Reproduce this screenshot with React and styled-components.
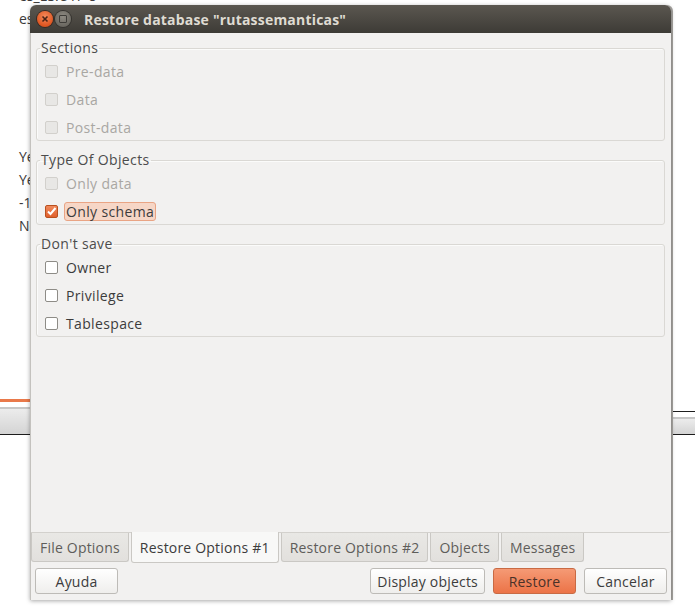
import React from "react";
import styled, { createGlobalStyle, css } from "styled-components";

const GlobalStyle = createGlobalStyle`
  body {
    margin: 0;
    background: #ffffff;
    font-family: "Open Sans", "Noto Sans", "DejaVu Sans", sans-serif;
  }
`;

const Desktop = styled.div`
  position: relative;
  width: 695px;
  height: 616px;
  overflow: hidden;
  background: #ffffff;
  display: flex;
  flex-direction: column;
`;

// terminal text behind the dialog
const BackText = styled.div`
  margin-top: -16px;
  padding-left: 19px;
  font-size: 14px;
  line-height: 23px;
  color: #3a3a3a;
`;

const BackLine = styled.div`
  height: 23px;
  white-space: pre;
`;

const Strip = styled.div`
  margin-top: 162px;
  display: flex;
  justify-content: space-between;
  height: 36px;
`;

const StripLeft = styled.div`
  width: 30px;
  border-top: 3px solid #e9794a;
  display: flex;
  flex-direction: column;
`;

const StripRight = styled.div`
  width: 24px;
  margin-top: 12px;
  border-top: 1px solid #1e1e1e;
  display: flex;
  flex-direction: column;
`;

const StripBar = styled.div`
  margin-top: ${(p) => p.$gap}px;
  flex: 1;
  border-top: 2px solid #c7c7c7;
  border-bottom: 1px solid #1c1c1c;
  background: linear-gradient(#ececec, #d4d4d4);
`;

const Dialog = styled.div`
  position: absolute;
  left: 30px;
  top: 5px;
  width: 641px;
  height: 595px;
  display: flex;
  flex-direction: column;
  border-radius: 6px 6px 0 0;
  box-shadow: 0 1px 4px rgba(0, 0, 0, 0.35), 2px 0 0 #a9a7a3;
`;

const TitleBar = styled.div`
  height: 28px;
  flex: none;
  display: flex;
  align-items: center;
  padding-left: 7px;
  gap: 2px;
  border-radius: 6px 6px 0 0;
  background: linear-gradient(#5b5750, #3d3b36);
`;

const WinButton = styled.div`
  width: 16px;
  height: 16px;
  border-radius: 50%;
  display: flex;
  align-items: center;
  justify-content: center;
  ${(p) =>
    p.$close
      ? css`
          background: radial-gradient(circle at 50% 35%, #f58a5c, #de5520 70%, #b9441a);
          box-shadow: 0 0 0 1px #3a2a22;
        `
      : css`
          background: radial-gradient(circle at 50% 35%, #8e8a82, #6c6962 70%, #55524c);
          box-shadow: 0 0 0 1px #34322e;
        `}
`;

const MinSquare = styled.div`
  width: 6px;
  height: 6px;
  border: 1px solid #3e3c38;
  border-radius: 1px;
`;

const Title = styled.div`
  margin-left: 11px;
  font-size: 14px;
  font-weight: 700;
  color: #dfdbd2;
  letter-spacing: 0.2px;
`;

const Body = styled.div`
  flex: 1;
  display: flex;
  flex-direction: column;
  background: #f2f1f0;
  border-left: 1px solid #c4c2be;
  font-size: 14px;
  letter-spacing: 0.35px;
`;

const Page = styled.div`
  flex: 1;
  padding: 7px 6px 0 5px;
  border-bottom: 1px solid #d3d1cd;
  border-radius: 0 0 3px 0;
  display: flex;
  flex-direction: column;
  gap: 11px;
`;

const Frame = styled.fieldset`
  margin: 0;
  padding: 3px 8px 1px 8px;
  border: 1px solid #dad8d4;
  border-radius: 3px;
  box-shadow: inset 1px 1px 0 #fbfbfa;
  display: flex;
  flex-direction: column;
  gap: 4px;
`;

const Legend = styled.legend`
  margin-left: -5px;
  padding: 0 1px;
  line-height: 16px;
  color: #4c4c4c;
`;

const Row = styled.label`
  height: 24px;
  display: flex;
  align-items: center;
  gap: 8px;
  color: ${(p) => (p.$disabled ? "#a9a7a3" : "#3c3c3c")};
`;

const Box = styled.span`
  width: 13px;
  height: 13px;
  box-sizing: border-box;
  border-radius: 2px;
  display: flex;
  align-items: center;
  justify-content: center;
  ${(p) =>
    p.$checked
      ? css`
          background: linear-gradient(#f08a5d, #e0602c);
          border: 1px solid #b9501f;
        `
      : p.$disabled
      ? css`
          background: #e8e7e5;
          border: 1px solid #d2d0cc;
        `
      : css`
          background: #ffffff;
          border: 1px solid #8e8c87;
        `}
`;

const RowText = styled.span`
  padding: 1px 2px;
  margin-left: -2px;
  border-radius: 3px;
  line-height: 17px;
  ${(p) =>
    p.$focus &&
    css`
      background: #f6d6c6;
      border: 1px solid #e9a484;
      padding: 0 1px;
    `}
`;

const Check = ({ label, checked, disabled, focus }) => (
  <Row $disabled={disabled}>
    <Box $checked={checked} $disabled={disabled}>
      {checked && (
        <svg width="11" height="11" viewBox="0 0 11 11">
          <path d="M2 5.5 L4.5 8 L9.5 2" fill="none" stroke="#ffffff" strokeWidth="2" />
        </svg>
      )}
    </Box>
    <RowText $focus={focus}>{label}</RowText>
  </Row>
);

const Tabs = styled.div`
  height: 31px;
  flex: none;
  display: flex;
  align-items: flex-start;
  gap: 2px;
  margin-top: -1px;
  letter-spacing: 0.2px;
`;

const Tab = styled.div`
  box-sizing: border-box;
  padding: 0 8px;
  display: flex;
  align-items: center;
  border: 1px solid #cac8c4;
  border-top: none;
  border-radius: 0 0 3px 3px;
  ${(p) =>
    p.$active
      ? css`
          height: 31px;
          background: #f8f8f7;
          color: #3c3c3c;
        `
      : css`
          height: 29px;
          margin-top: 1px;
          background: linear-gradient(#e9e8e5, #e2e0dd);
          color: #5e5d5a;
        `}
`;

const ButtonRow = styled.div`
  flex: none;
  display: flex;
  align-items: center;
  padding: 5px 4px 6px 4px;
  gap: 8px;
`;

const Spacer = styled.div`
  flex: 1;
`;

const Button = styled.button`
  height: 26px;
  min-width: 83px;
  padding: 0 6px;
  font-family: inherit;
  font-size: 14px;
  letter-spacing: 0.2px;
  border-radius: 3px;
  ${(p) =>
    p.$primary
      ? css`
          background: linear-gradient(#f59a75, #ec7347);
          border: 1px solid #c86a44;
          color: #4a3128;
        `
      : css`
          background: linear-gradient(#ffffff, #efeeec);
          border: 1px solid #bdbbb7;
          color: #3c3c3c;
        `}
`;

export default function App() {
  return (
    <Desktop>
      <GlobalStyle />
      <BackText>
        <BackLine>es_ES.UTF-8</BackLine>
        <BackLine>es_ES.UTF-8</BackLine>
        <BackLine> </BackLine>
        <BackLine> </BackLine>
        <BackLine> </BackLine>
        <BackLine> </BackLine>
        <BackLine> </BackLine>
        <BackLine>Yes</BackLine>
        <BackLine>Yes</BackLine>
        <BackLine>-1</BackLine>
        <BackLine>No</BackLine>
      </BackText>
      <Strip>
        <StripLeft>
          <StripBar $gap={5} />
        </StripLeft>
        <StripRight>
          <StripBar $gap={5} />
        </StripRight>
      </Strip>

      <Dialog>
        <TitleBar>
          <WinButton $close>
            <svg width="8" height="8" viewBox="0 0 8 8">
              <path d="M1.5 1.5 L6.5 6.5 M6.5 1.5 L1.5 6.5" stroke="#4a2416" strokeWidth="1.6" />
            </svg>
          </WinButton>
          <WinButton>
            <MinSquare />
          </WinButton>
          <Title>Restore database "rutassemanticas"</Title>
        </TitleBar>
        <Body>
          <Page>
            <Frame>
              <Legend>Sections</Legend>
              <Check label="Pre-data" disabled />
              <Check label="Data" disabled />
              <Check label="Post-data" disabled />
            </Frame>
            <Frame>
              <Legend>Type Of Objects</Legend>
              <Check label="Only data" disabled />
              <Check label="Only schema" checked focus />
            </Frame>
            <Frame>
              <Legend>Don't save</Legend>
              <Check label="Owner" />
              <Check label="Privilege" />
              <Check label="Tablespace" />
            </Frame>
          </Page>
          <Tabs>
            <Tab>File Options</Tab>
            <Tab $active>Restore Options #1</Tab>
            <Tab>Restore Options #2</Tab>
            <Tab>Objects</Tab>
            <Tab>Messages</Tab>
          </Tabs>
          <ButtonRow>
            <Button>Ayuda</Button>
            <Spacer />
            <Button>Display objects</Button>
            <Button $primary>Restore</Button>
            <Button>Cancelar</Button>
          </ButtonRow>
        </Body>
      </Dialog>
    </Desktop>
  );
}
